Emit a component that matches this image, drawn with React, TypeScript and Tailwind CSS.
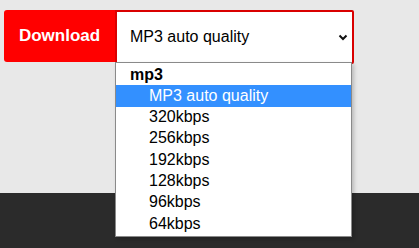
import React from "react";

const options = ["MP3 auto quality", "320kbps", "256kbps", "192kbps", "128kbps", "96kbps", "64kbps"];

export default function App() {
  return (
    <div
      className="relative w-[419px] h-[248px] bg-[#e8e8e8] flex flex-col overflow-hidden"
      style={{ fontFamily: '"Liberation Sans", Arial, sans-serif' }}
    >
      <div className="h-[193px] pt-[10px] pl-[4px]">
        <div className="flex items-start">
          <div className="w-[111px] h-[52px] bg-[#ff0000] rounded-l-[3px] flex items-center justify-center text-white font-bold text-[17px]">
            Download
          </div>
          <div className="w-[239px] h-[54px] bg-white border-2 border-[#d90000] rounded-r-[2px] flex items-center justify-between pl-[13px] pr-[3px] text-[16px] text-black">
            <span>MP3 auto quality</span>
            <svg width="12" height="12" viewBox="0 0 12 12">
              <path d="M2.5 4.5 L6 8 L9.5 4.5" fill="none" stroke="#111" strokeWidth="2" />
            </svg>
          </div>
        </div>
      </div>
      <div className="flex-1 bg-[#2b2b2b]" />
      <div className="absolute left-[115px] top-[62px] w-[237px] h-[175px] bg-white border border-[#8a8a8a] shadow-[2px_2px_4px_rgba(0,0,0,0.2)] text-[16px] text-black py-[1px]">
        <div className="h-[21px] pl-[14px] font-bold flex items-center">mp3</div>
        {options.map((o, i) => (
          <div
            key={o}
            className={
              i === 0
                ? "h-[21.5px] pl-[33px] flex items-center bg-[#3390ff] text-white"
                : "h-[21.3px] pl-[33px] flex items-center"
            }
          >
            {o}
          </div>
        ))}
      </div>
    </div>
  );
}
